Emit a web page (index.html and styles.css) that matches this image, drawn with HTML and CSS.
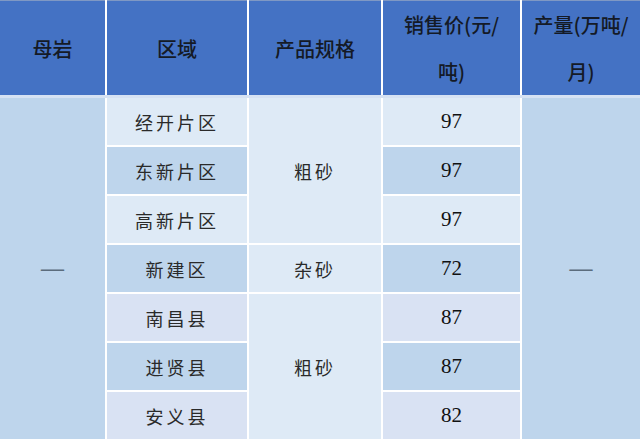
FILE: index.html
```html
<!DOCTYPE html>
<html lang="zh">
<head>
<meta charset="utf-8">
<link rel="stylesheet" href="styles.css">
</head>
<body>
<table class="grid">
  <colgroup>
    <col class="c1"><col class="c2"><col class="c3"><col class="c4"><col class="c5">
  </colgroup>
  <thead>
    <tr class="head">
      <th>母岩</th>
      <th>区域</th>
      <th>产品规格</th>
      <th>销售价(元/<br>吨)</th>
      <th>产量(万吨/<br>月)</th>
    </tr>
  </thead>
  <tbody>
    <tr>
      <td rowspan="7" class="side dash">—</td>
      <td class="zh light">经开片区</td>
      <td rowspan="3" class="zh spec">粗砂</td>
      <td class="num light">97</td>
      <td rowspan="7" class="side dash">—</td>
    </tr>
    <tr>
      <td class="zh dark">东新片区</td>
      <td class="num dark">97</td>
    </tr>
    <tr>
      <td class="zh light">高新片区</td>
      <td class="num light">97</td>
    </tr>
    <tr>
      <td class="zh dark">新建区</td>
      <td class="zh spec">杂砂</td>
      <td class="num dark">72</td>
    </tr>
    <tr>
      <td class="zh pale">南昌县</td>
      <td rowspan="3" class="zh spec">粗砂</td>
      <td class="num pale">87</td>
    </tr>
    <tr>
      <td class="zh dark">进贤县</td>
      <td class="num dark">87</td>
    </tr>
    <tr>
      <td class="zh pale">安义县</td>
      <td class="num pale">82</td>
    </tr>
  </tbody>
</table>
</body>
</html>
```

FILE: styles.css
```css
html, body {
  margin: 0;
  padding: 0;
  background: #ffffff;
  overflow: hidden;
}

.grid {
  width: 641px;
  table-layout: fixed;
  border-collapse: collapse;
  border-top: 1px solid #7f98c4;
}

.c1 { width: 106px; }
.c2 { width: 142px; }
.c3 { width: 134px; }
.c4 { width: 139px; }
.c5 { width: 120px; }

.grid th,
.grid td {
  border: 2px solid #ffffff;
  padding: 0;
  text-align: center;
  vertical-align: middle;
}

.grid th:first-child,
.grid td.side:first-child { border-left: 0; }

.head th {
  height: 92px;
  background: #4472c4;
  color: #141a26;
  font-family: "Noto Sans CJK SC", "Noto Sans", sans-serif;
  font-weight: 500;
  font-size: 20px;
  line-height: 47px;
  border-top: 0;
  border-bottom: 3px solid #d6e2f3;
}

.grid tbody td {
  height: 47px;
}

.zh {
  font-family: "Noto Sans CJK SC", "Noto Sans", sans-serif;
  font-weight: 400;
  font-size: 18px;
  letter-spacing: 3px;
  color: #2a2a2a;
}

.num {
  font-family: "Liberation Serif", "Times New Roman", serif;
  font-size: 21px;
  color: #111111;
}

.side {
  background: #bed5ec;
}

.dash {
  font-family: "Liberation Serif", serif;
  font-size: 23px;
  font-weight: 700;
  color: #5b6c7c;
  padding-bottom: 2px;
}

.spec { background: #deeaf6; }
.light { background: #deeaf6; }
.dark { background: #bed5ec; }
.pale { background: #d9e2f3; }
```
